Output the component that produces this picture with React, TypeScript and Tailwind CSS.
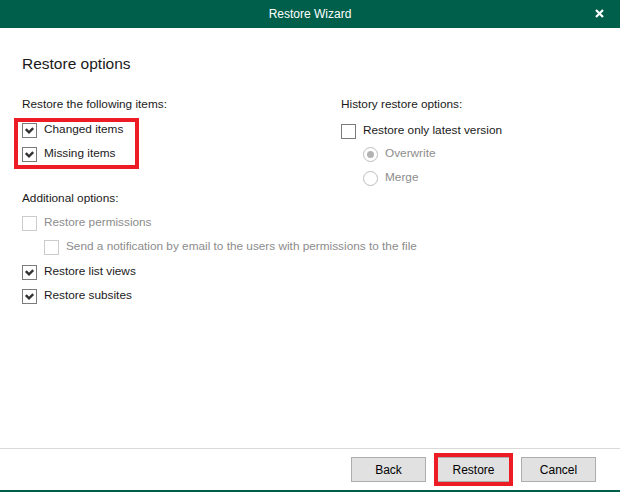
import React from "react";

const font = { fontFamily: '"Liberation Sans", Arial, sans-serif' };

const Check = () => (
  <svg width="11" height="11" viewBox="0 0 11 11" className="block">
    <path d="M1.8 4.2 L5 7.4 L9.2 3.2" fill="none" stroke="#333333" strokeWidth="2.4" />
  </svg>
);

const Checkbox = ({ checked, disabled }: { checked?: boolean; disabled?: boolean }) => (
  <span
    className={`flex items-center justify-center w-[15px] h-[15px] border bg-white shrink-0 ${
      disabled ? "border-[#cccccc]" : "border-[#7a7a7a]"
    }`}
  >
    {checked && <Check />}
  </span>
);

const CheckRow = ({ label, checked, disabled }: { label: string; checked?: boolean; disabled?: boolean }) => (
  <div className="flex items-center h-6 gap-[7px] whitespace-nowrap">
    <Checkbox checked={checked} disabled={disabled} />
    <span className={disabled ? "text-[#8c8c8c]" : "text-[#1a1a1a]"}>{label}</span>
  </div>
);

const Radio = ({ label, selected }: { label: string; selected?: boolean }) => (
  <div className="flex items-center h-6 gap-[7px] pl-[22px]">
    <span className="flex items-center justify-center w-[15px] h-[15px] rounded-full border border-[#bdbdbd] bg-white">
      {selected && <span className="w-[7px] h-[7px] rounded-full bg-[#b3b3b3]" />}
    </span>
    <span className="text-[#8c8c8c]">{label}</span>
  </div>
);

const Button = ({ children }: { children: React.ReactNode }) => (
  <button className="w-[75px] h-[25px] bg-[#e1e1e1] border border-[#adadad] text-[12px] text-black">
    {children}
  </button>
);

export default function App() {
  return (
    <div className="w-[620px] h-[492px] flex flex-col bg-white text-[11.8px]" style={font}>
      <div className="h-[28px] bg-[#005f4b] flex items-center justify-center relative shrink-0">
        <span className="text-white text-[12px]">Restore Wizard</span>
        <svg width="9" height="9" viewBox="0 0 9 9" className="absolute right-[16px] top-[9px]">
          <path d="M1 1 L8 8 M8 1 L1 8" stroke="white" strokeWidth="2.2" />
        </svg>
      </div>

      <div className="flex-1 pl-[22px] pt-[26px]">
        <h1 className="text-[15.5px] leading-5 text-[#1a1a1a] mb-[19px]">Restore options</h1>

        <div className="flex">
          <div className="w-[319px] shrink-0">
            <div className="h-6 flex items-center text-[#1a1a1a]">Restore the following items:</div>
            <div className="w-[125px] -ml-2 mt-px border-4 border-[#ed1c24] pl-1 pb-[3px] flex flex-col gap-2">
              <div className="flex items-center h-4 gap-[7px]">
                <Checkbox checked />
                <span className="text-[#1a1a1a]">Changed items</span>
              </div>
              <div className="flex items-center h-4 gap-[7px]">
                <Checkbox checked />
                <span className="text-[#1a1a1a]">Missing items</span>
              </div>
            </div>

            <div className="h-6 mt-[18px] flex items-center text-[#1a1a1a]">Additional options:</div>
            <CheckRow label="Restore permissions" disabled />
            <div className="pl-[22px] pb-px">
              <CheckRow label="Send a notification by email to the users with permissions to the file" disabled />
            </div>
            <CheckRow label="Restore list views" checked />
            <CheckRow label="Restore subsites" checked />
          </div>

          <div>
            <div className="h-6 flex items-center text-[#1a1a1a]">History restore options:</div>
            <div className="mt-[2px]">
              <CheckRow label="Restore only latest version" />
              <div className="-mt-px">
                <Radio label="Overwrite" selected />
                <Radio label="Merge" />
              </div>
            </div>
          </div>
        </div>
      </div>

      <div className="border-t border-[#d9d9d9] border-b-2 border-b-[#005f4b] pt-2 pb-2 pr-[24px] flex justify-end gap-[10px] shrink-0">
        <Button>Back</Button>
        <div className="relative">
          <Button>Restore</Button>
          <span className="absolute -inset-x-[2px] -inset-y-[4px] border-4 border-[#ed1c24] pointer-events-none" />
        </div>
        <Button>Cancel</Button>
      </div>
    </div>
  );
}
